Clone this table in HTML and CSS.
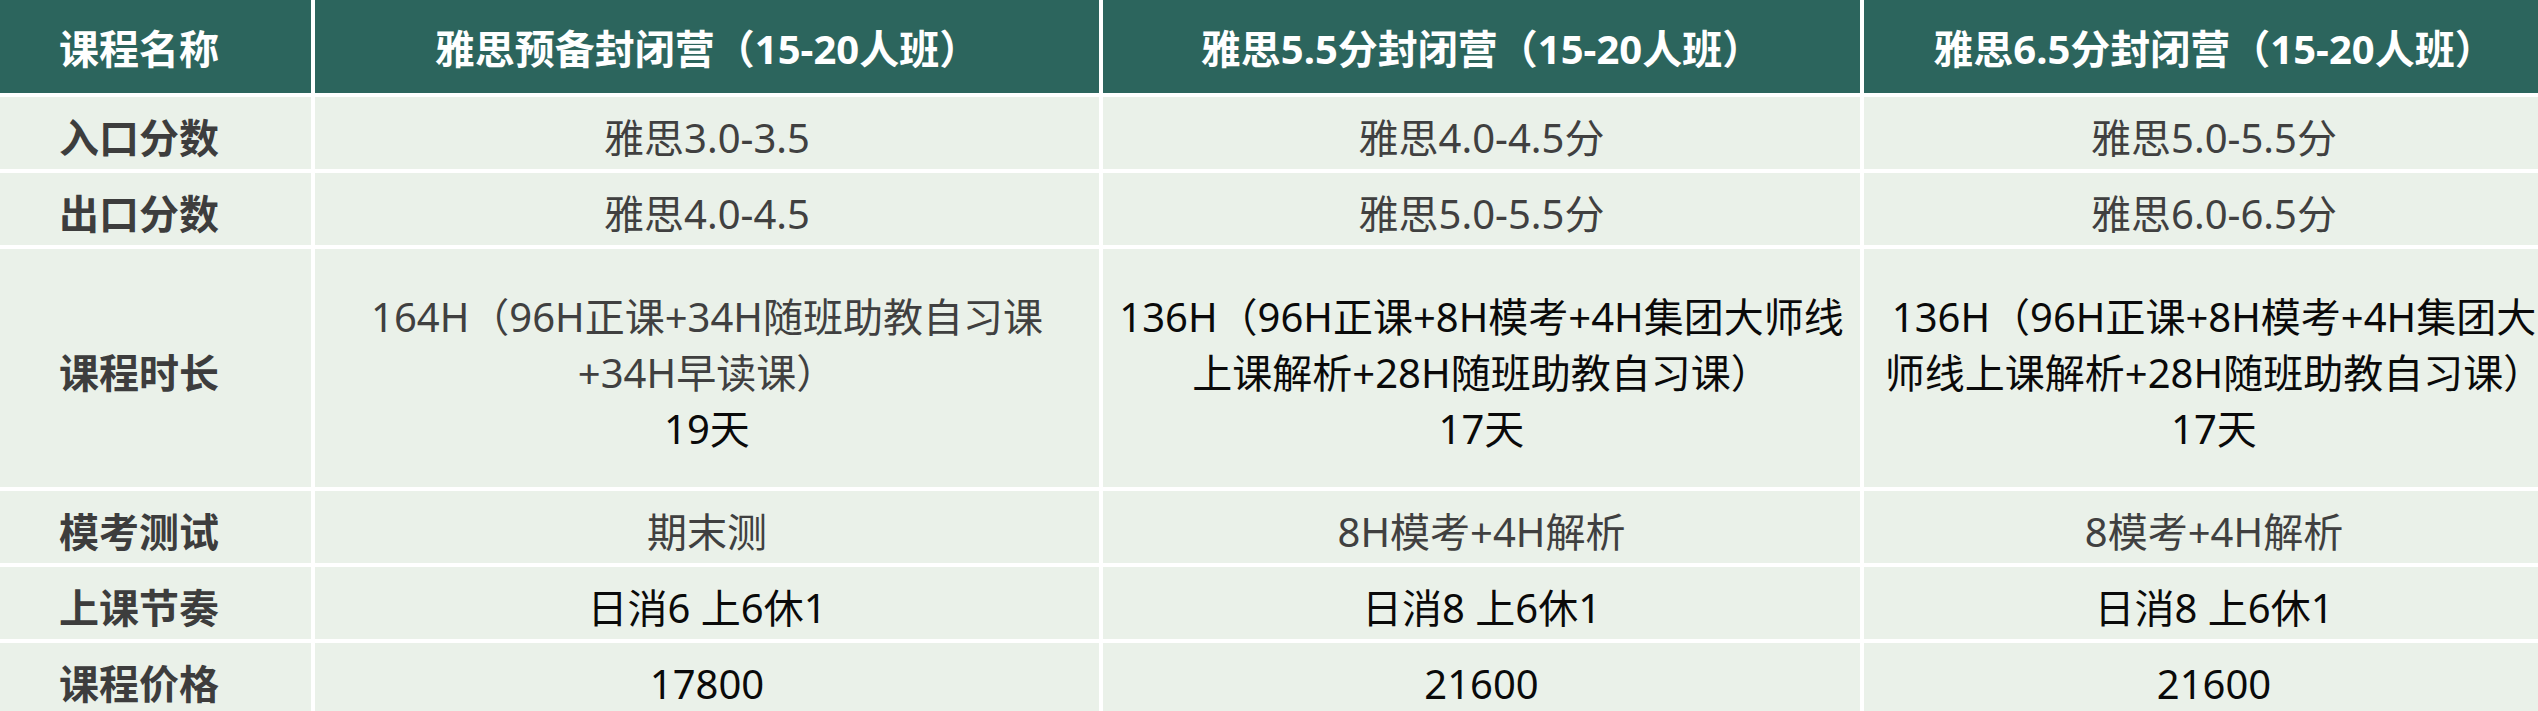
FILE: index.html
```html
<!DOCTYPE html>
<html lang="zh-CN">
<head>
<meta charset="utf-8">
<title>课程对比</title>
<link rel="stylesheet" href="styles.css">
</head>
<body>
<div class="table">
  <div class="cell head label">课程名称</div>
  <div class="cell head">雅思预备封闭营（15-20人班）</div>
  <div class="cell head">雅思5.5分封闭营（15-20人班）</div>
  <div class="cell head">雅思6.5分封闭营（15-20人班）</div>

  <div class="cell label">入口分数</div>
  <div class="cell">雅思3.0-3.5</div>
  <div class="cell">雅思4.0-4.5分</div>
  <div class="cell">雅思5.0-5.5分</div>

  <div class="cell label">出口分数</div>
  <div class="cell">雅思4.0-4.5</div>
  <div class="cell">雅思5.0-5.5分</div>
  <div class="cell">雅思6.0-6.5分</div>

  <div class="cell label">课程时长</div>
  <div class="cell multi">
    <span class="line">164H（96H正课+34H随班助教自习课</span>
    <span class="line">+34H早读课）</span>
    <span class="line dark">19天</span>
  </div>
  <div class="cell multi dark">
    <span class="line">136H（96H正课+8H模考+4H集团大师线</span>
    <span class="line">上课解析+28H随班助教自习课）</span>
    <span class="line">17天</span>
  </div>
  <div class="cell multi dark">
    <span class="line">136H（96H正课+8H模考+4H集团大</span>
    <span class="line">师线上课解析+28H随班助教自习课）</span>
    <span class="line">17天</span>
  </div>

  <div class="cell label">模考测试</div>
  <div class="cell">期末测</div>
  <div class="cell">8H模考+4H解析</div>
  <div class="cell">8模考+4H解析</div>

  <div class="cell label">上课节奏</div>
  <div class="cell dark">日消6 上6休1</div>
  <div class="cell dark">日消8 上6休1</div>
  <div class="cell dark">日消8 上6休1</div>

  <div class="cell label">课程价格</div>
  <div class="cell dark">17800</div>
  <div class="cell dark">21600</div>
  <div class="cell dark">21600</div>
</div>
</body>
</html>
```

FILE: styles.css
```css
html, body {
  margin: 0;
  padding: 0;
  background: #ffffff;
  overflow: hidden;
}

.table {
  display: grid;
  grid-template-columns: 311px 784px 757px 700px;
  grid-template-rows: 93px 72px 72px 238px 72px 72px 72px;
  gap: 4px;
  width: max-content;
  font-family: "Noto Sans", "Noto Sans CJK SC", sans-serif;
  font-size: 40px;
  color: #404040;
}

.cell {
  background: #eaf1e9;
  display: flex;
  flex-direction: column;
  align-items: center;
  justify-content: center;
  text-align: center;
  white-space: nowrap;
  line-height: 56px;
  padding-top: 9px;
}

.cell.head {
  background: #2c655d;
  color: #ffffff;
  font-weight: 700;
  padding-top: 4px;
}

.cell.label {
  align-items: flex-start;
  padding-left: 59px;
  font-weight: 700;
  color: #3d3d3d;
}

.cell.head.label {
  color: #ffffff;
}

.line {
  display: block;
}

.dark,
.line.dark {
  color: #0a0a0a;
}
```
